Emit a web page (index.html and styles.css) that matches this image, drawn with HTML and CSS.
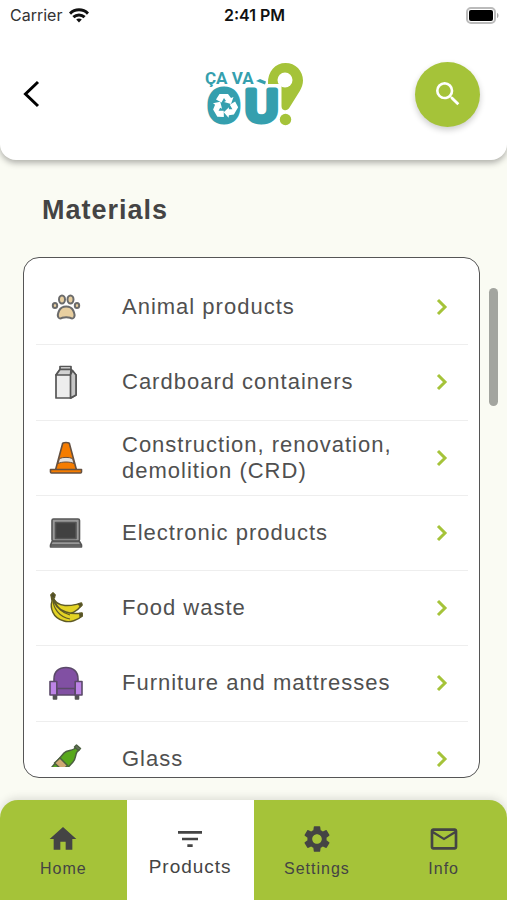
FILE: index.html
```html
<!DOCTYPE html>
<html lang="en">
<head>
<meta charset="utf-8">
<meta name="viewport" content="width=device-width, initial-scale=1">
<title>Ça va où? – Materials</title>
<link rel="stylesheet" href="styles.css">
</head>
<body>
<header class="header">
  <div class="status">
    <div class="carrier">
      <span>Carrier</span>
      <svg width="20" height="15" viewBox="0 0 20 15" fill="none" stroke="#111" stroke-width="3" aria-hidden="true">
        <path d="M1 5.6C6 .6 14 .6 19 5.6"/>
        <path d="M4.4 9.2c3.2-3 8-3 11.2 0"/>
        <path d="M10 14.5 7.2 11.6c1.6-1.5 4-1.5 5.6 0z" fill="#111" stroke="none"/>
      </svg>
    </div>
    <span class="clock">2:41 PM</span>
    <svg class="battery" width="33" height="17" viewBox="0 0 33 17" aria-hidden="true">
      <rect x="1" y="1" width="28" height="15" rx="4" fill="#fff" stroke="#bbb" stroke-width="2"/>
      <rect x="3" y="3" width="24" height="11" rx="2" fill="#000"/>
      <path d="M31 6c2 .6 2 4.4 0 5z" fill="#aaa"/>
    </svg>
  </div>
  <div class="bar">
    <button class="back" type="button" aria-label="Back">
      <svg width="18" height="28" viewBox="0 0 18 28" fill="none" stroke="#000" stroke-width="3"><path d="M16 2 3.500 14 16 26"/></svg>
    </button>
    <svg class="logo" width="101" height="66" viewBox="0 0 101 66" role="img" aria-label="Ça va où">
      <path d="M65 23C64.500 10 72.500 2 82.500 2c10 0 17.500 7.800 17.500 17.500 0 4-1.400 7-3.200 10.400L86.500 46.500c-1.500 2.600-3.500 3-5.500 2.500-2-.6-2.500-2-2.500-4.500V23z" fill="#a5c339"/>
      <circle cx="82" cy="19" r="7.500" fill="#fff"/>
      <circle cx="82.500" cy="58.500" r="5.700" fill="#a5c339"/>
      <text class="logo-small" x="2" y="23">ÇA VA</text>
      <path d="m53 20 4-2 6 2.500-1 3z" fill="#359fae"/>
      <text class="logo-big" x="5" y="61">O</text>
      <text class="logo-big logo-u" x="42" y="61">U</text>
      <circle cx="22" cy="45" r="11.500" fill="#359fae"/>
      <g fill="#fff">
        <path id="arrow" d="M16.500 33h8.500l3 4 2.500-1-2.500 7-7-2 2-1-2-3-2.500 4.500-5.500-3z"/>
        <use href="#arrow" transform="rotate(120 22 45)"/>
        <use href="#arrow" transform="rotate(240 22 45)"/>
      </g>
    </svg>
    <button class="search" type="button" aria-label="Search">
      <svg width="32" height="32" viewBox="0 0 24 24" fill="#fff"><path d="M15.500 14h-.79l-.28-.27A6.471 6.471 0 0 0 16 9.500 6.500 6.500 0 1 0 9.500 16c1.610 0 3.090-.59 4.230-1.570l.27.28v.79l5 4.990L20.490 19l-4.990-5zm-6 0C7.010 14 5 11.990 5 9.500S7.010 5 9.500 5 14 7.010 14 9.500 11.990 14 9.500 14z"/></svg>
    </button>
  </div>
</header>

<main class="main">
  <h1 class="title">Materials</h1>
  <div class="panel">
    <div class="card">
      <div class="viewport">
        <ul class="list">
          <li><a class="row" href="#animal">
            <svg class="icon" viewBox="0 0 34 34" fill="#e8cfa0" stroke="#6b6b6b" stroke-width="2">
              <ellipse cx="13" cy="9.500" rx="3" ry="4"/><ellipse cx="21.500" cy="9.500" rx="3" ry="4"/>
              <ellipse cx="6" cy="15.500" rx="2.200" ry="2.600"/><ellipse cx="28" cy="15.500" rx="2.200" ry="2.600"/>
              <path d="M9.500 27.500c-1.300-2-.3-5 .7-7 1.500-3 4-4 7-4s5.500 1 7 4c1 2 2 5 .7 7-.8 1-2.500 1-3.700.3-2.500-.8-5.500-.8-8 0-1.200.7-2.900.7-3.700-.3z"/>
            </svg>
            <span class="label">Animal products</span>
            <svg class="chevron" viewBox="0 0 12 18"><path d="m2 2 7 7-7 7"/></svg></a></li>
          <li><a class="row" href="#cardboard">
            <svg class="icon" viewBox="0 0 34 34" fill="#ededed" stroke="#555" stroke-width="1.700" stroke-linejoin="round">
              <path d="M11 1.500h11v3H11z"/><path d="M11 4.500h11l5 5.500v20l-5 3H7V10z"/><path d="M21.500 10H7l4-5.500h11z" fill="#d2d2d2"/><path d="M21.500 10 23.500 5.500l3.500 4.500v20l-5.500 3z" fill="#c6c6c6"/>
            </svg>
            <span class="label">Cardboard containers</span>
            <svg class="chevron" viewBox="0 0 12 18"><path d="m2 2 7 7-7 7"/></svg></a></li>
          <li><a class="row" href="#construction">
            <svg class="icon" viewBox="0 0 34 34" fill="#f57c00" stroke="#655040" stroke-width="1.600" stroke-linejoin="round">
              <path d="M13.500 3c0-2 7-2 7 0l7 26h-21z"/><path d="M10.500 17.500c3.500-1.500 9.500-1.500 13 0l1.500 5c-4-2-12-2-16 0z" fill="#e6e2df" stroke-width="1"/>
              <path d="M1.500 28.500h31V31q0 1-1 1h-29q-1 0-1-1z"/>
            </svg>
            <span class="label">Construction, renovation, demolition (CRD)</span>
            <svg class="chevron" viewBox="0 0 12 18"><path d="m2 2 7 7-7 7"/></svg></a></li>
          <li><a class="row" href="#electronic">
            <svg class="icon" viewBox="0 0 34 34" fill="#999" stroke="#555" stroke-width="1.600" stroke-linejoin="round">
              <rect x="3" y="3" width="27.500" height="22" rx="1.500"/><rect x="6.500" y="6.500" width="20.500" height="16" fill="#414141"/>
              <path d="M3 25.500h27.500l2 3.500v2h-31v-2z"/><path d="M1.500 29h31"/>
            </svg>
            <span class="label">Electronic products</span>
            <svg class="chevron" viewBox="0 0 12 18"><path d="m2 2 7 7-7 7"/></svg></a></li>
          <li><a class="row" href="#food">
            <svg class="icon" viewBox="0 0 34 34" fill="#e3d324" stroke="#5e5a26" stroke-width="1.400" stroke-linejoin="round">
              <path d="M4 6c2 6 6 8 12 8.500 6 .5 10-1 15.500-2l1 2c-4 5-11 10-17 8S4 14 4 6z"/>
              <path d="M3 5c2 9 7 14 14 16 6 2 10 2 16 1v3c-4 4-12 7-18 5C3 27 1 16 3 10L2 4l2-2 2 2z"/>
              <path d="M4 8c0 9 6 18 17 20M5 8c3 9 8 14 16 16" fill="none" stroke-width="1.200"/>
              <path d="M30.500 22.400h2.700V25l-2 1zM29.500 13l3-1 .7 2-2 1.700zM2 4l2-2 2 2-.5 2.500-2 .5z" fill="#4a4930"/>
            </svg>
            <span class="label">Food waste</span>
            <svg class="chevron" viewBox="0 0 12 18"><path d="m2 2 7 7-7 7"/></svg></a></li>
          <li><a class="row" href="#furniture">
            <svg class="icon" viewBox="0 0 34 34" fill="#8150a3" stroke="#5b4a69" stroke-width="1.600" stroke-linejoin="round">
              <path d="M4.500 29h3v4h-3zM26.500 29h3v4h-3z" fill="#555" stroke="#555"/>
              <path d="M5 26V13C5 5.500 10 1.500 17 1.500S29 5.500 29 13v13z"/><path d="M8 22.500h18V29H8z"/>
              <path d="M1 15.500h6.800V29H1zM26.200 15.500H33V29h-6.800z" fill="#bd84e6"/>
            </svg>
            <span class="label">Furniture and mattresses</span>
            <svg class="chevron" viewBox="0 0 12 18"><path d="m2 2 7 7-7 7"/></svg></a></li>
          <li><a class="row" href="#glass">
            <svg class="icon" viewBox="0 0 34 34" fill="#58a81c" stroke="#4c6040" stroke-width="1.500" stroke-linejoin="round">
              <path d="M25 7 27 5l3 3-2 2c-2 3-1 7-4 10L12 33c-3 3-12-4-9-8L15 11c3-3 7-2 10-4z"/>
              <path d="m11 16 7.500 7.500-5 5L5.500 21z" fill="#cfa873"/><path d="M25.500 5 27.500 3l4 3.500-2 2z" fill="#66705f"/>
            </svg>
            <span class="label">Glass</span>
            <svg class="chevron" viewBox="0 0 12 18"><path d="m2 2 7 7-7 7"/></svg></a></li>
        </ul>
      </div>
    </div>
    <div class="track" aria-hidden="true"><div class="thumb"></div></div>
  </div>
</main>

<nav class="tabs">
  <a class="tab" href="#home">
    <svg width="32" height="32" viewBox="0 0 24 24"><path d="M10 20v-6h4v6h5v-8h3L12 3 2 12h3v8z"/></svg>
    <span>Home</span></a>
  <a class="tab active" href="#products" aria-current="page">
    <svg width="32" height="32" viewBox="0 0 24 24"><path d="M10 18h4v-2h-4v2zM3 6v2h18V6H3zm3 7h12v-2H6v2z"/></svg>
    <span>Products</span></a>
  <a class="tab" href="#settings">
    <svg width="32" height="32" viewBox="0 0 24 24"><path d="M19.140 12.940c.04-.3.06-.61.06-.94 0-.32-.02-.64-.07-.94l2.030-1.580a.49.49 0 0 0 .12-.61l-1.920-3.320a.488.488 0 0 0-.59-.22l-2.390.96c-.5-.38-1.030-.7-1.620-.94l-.36-2.540a.484.484 0 0 0-.48-.41h-3.840c-.24 0-.43.17-.47.41l-.36 2.540c-.59.24-1.130.57-1.620.94l-2.390-.96c-.22-.08-.47 0-.59.22L2.740 8.870c-.12.21-.08.47.12.61l2.030 1.580c-.05.3-.09.63-.09.94s.02.64.07.94l-2.030 1.580a.49.49 0 0 0-.12.61l1.920 3.320c.12.22.37.29.59.22l2.390-.96c.5.38 1.030.7 1.620.94l.36 2.540c.05.24.24.41.48.41h3.840c.24 0 .44-.17.47-.41l.36-2.540c.59-.24 1.130-.56 1.620-.94l2.390.96c.22.08.47 0 .59-.22l1.920-3.320c.12-.22.07-.47-.12-.61l-2.010-1.580zM12 15.600c-1.980 0-3.600-1.620-3.600-3.600s1.620-3.600 3.600-3.600 3.600 1.620 3.600 3.600-1.620 3.600-3.600 3.600z"/></svg>
    <span>Settings</span></a>
  <a class="tab" href="#info">
    <svg width="32" height="32" viewBox="0 0 24 24"><path d="M20 4H4c-1.100 0-2 .9-2 2v12c0 1.100.9 2 2 2h16c1.100 0 2-.9 2-2V6c0-1.100-.9-2-2-2zm0 14H4V8l8 5 8-5v10zm-8-7L4 6h16l-8 5z"/></svg>
    <span>Info</span></a>
</nav>
</body>
</html>
```
FILE: styles.css
```css
* { box-sizing: border-box; }

body {
  margin: 0;
  height: 100vh;
  display: flex;
  flex-direction: column;
  background: #fafbf3;
  color: #444;
  font-family: "Liberation Sans", Arial, sans-serif;
}

a { color: inherit; text-decoration: none; }
svg { display: block; flex: none; }

button {
  display: grid;
  place-items: center;
  padding: 0;
  border: 0;
  background: none;
}

.header {
  background: #fff;
  border-radius: 0 0 16px 16px;
  box-shadow: 0 3px 6px rgba(0, 0, 0, 0.3);
}

.status {
  display: grid;
  grid-template-columns: 1fr auto 1fr;
  align-items: center;
  height: 30px;
  padding: 0 8px 0 10px;
  font-family: Inter, sans-serif;
  font-size: 16px;
  color: #333;
}

.carrier { display: flex; align-items: center; gap: 7px; }
.clock { font-weight: 600; color: #111; }
.battery { justify-self: end; }

.bar {
  display: grid;
  grid-template-columns: 1fr auto 1fr;
  align-items: center;
  height: 130px;
  padding: 0 27px 2px;
}

.back { justify-self: start; margin-left: -5px; }

.search {
  justify-self: end;
  width: 65px;
  height: 65px;
  border-radius: 50%;
  background: #a5c339;
  box-shadow: 0 3px 6px rgba(0, 0, 0, 0.2);
}

.logo { overflow: visible; }

.logo text {
  font-family: Roboto, sans-serif;
  font-weight: 700;
  fill: #359fae;
  stroke: #359fae;
}

.logo .logo-small { font-size: 17px; stroke-width: 0; }
.logo .logo-big { font-size: 46px; stroke-width: 5px; stroke-linejoin: round; }
.logo .logo-u { font-family: "Liberation Sans", Arial, sans-serif; }

.main {
  flex: 1;
  min-height: 0;
  display: flex;
  flex-direction: column;
  padding: 34px 9px 22px 23px;
}

.title {
  margin: 0 0 31px;
  padding-left: 19px;
  font-size: 27px;
  line-height: 32px;
  letter-spacing: 1px;
}

.panel { flex: 1; min-height: 0; display: flex; gap: 9px; }

.card {
  flex: 1;
  padding: 12px 11px 10px 12px;
  border: 1px solid #555;
  border-radius: 16px;
  background: #fff;
}

.viewport { height: 100%; overflow: hidden; }

.list {
  display: grid;
  grid-template-rows: repeat(7, 1fr);
  height: 106%;
  margin: 0;
  padding: 0;
  list-style: none;
}

.list li { border-bottom: 1px solid #eee; }

.row {
  display: flex;
  align-items: center;
  height: 100%;
  padding: 0 20px 0 13px;
  font-size: 22px;
  line-height: 26px;
  letter-spacing: 1px;
  color: #505050;
}

.icon { width: 34px; height: 34px; }
.label { flex: 1; padding-left: 39px; }
.chevron { width: 12px; height: 18px; fill: none; stroke: #a5c339; stroke-width: 3; }

.track { width: 9px; padding-top: 31px; }
.thumb { height: 24%; border-radius: 5px; background: #a3a59f; }

.tabs {
  display: grid;
  grid-template-columns: repeat(4, 1fr);
  height: 100px;
  overflow: hidden;
  border-radius: 18px 18px 0 0;
  background: #a5c339;
  box-shadow: 0 -2px 8px rgba(0, 0, 0, 0.12);
}

.tab {
  display: flex;
  flex-direction: column;
  align-items: center;
  padding-top: 23px;
  gap: 4px;
  font-size: 16px;
  line-height: 20px;
  letter-spacing: 1px;
}

.tab svg { fill: #444; }
.active { gap: 2px; background: #fff; font-size: 19px; }
```
